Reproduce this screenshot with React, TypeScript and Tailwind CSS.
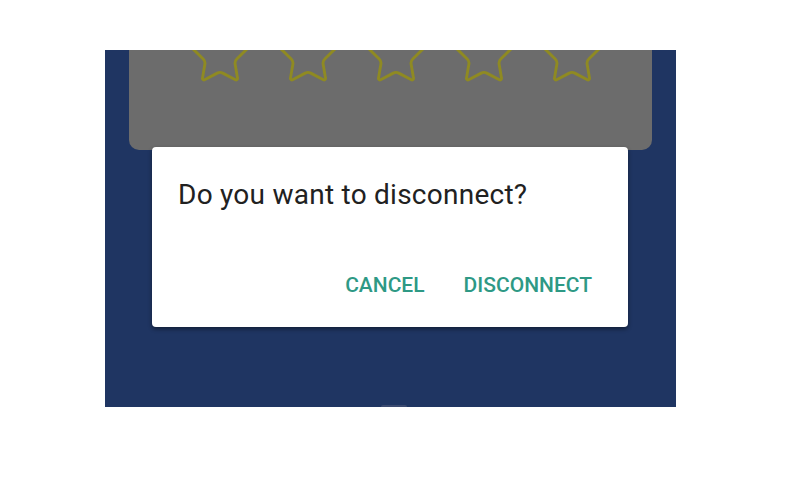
import { Star } from 'lucide-react'

export default function App() {
  return (
    <div className="w-[800px] h-[500px] bg-white pt-[50px] pl-[105px]" style={{ fontFamily: 'Roboto, "Noto Sans", sans-serif' }}>
      <div className="w-[571px] h-[357px] bg-[#1f3562] flex flex-col">
        {/* dimmed rating card behind the dialog */}
        <div className="mx-[24px] h-[100px] bg-[#6c6c6c] rounded-b-[10px] overflow-hidden">
          <div className="flex gap-[22px] pl-[58px] -mt-[28px]">
            {[0, 1, 2, 3, 4].map(i => (
              <Star key={i} size={66} strokeWidth={1.05} className="text-[#8f8a22] shrink-0" />
            ))}
          </div>
        </div>

        <div className="relative -mt-[3px] ml-[47px] mr-[48px] h-[180px] bg-white rounded-[4px] shadow-[0_2px_4px_rgba(0,0,0,0.45)] pt-[32px] pl-[26px] pr-[36px]">
          <p className="text-[28px] leading-[32px] tracking-[0.25px] text-[#212121]">Do you want to disconnect?</p>
          <div className="flex justify-end gap-[39px] mt-[62px]">
            <button className="text-[21px] leading-[24px] font-medium text-[#2e9985]">CANCEL</button>
            <button className="text-[21px] leading-[24px] font-medium text-[#2e9985]">DISCONNECT</button>
          </div>
        </div>

        <div className="mt-auto ml-[276px] w-[26px] h-[2px] bg-[#3b4a70] rounded-t-full" />
      </div>
    </div>
  )
}
